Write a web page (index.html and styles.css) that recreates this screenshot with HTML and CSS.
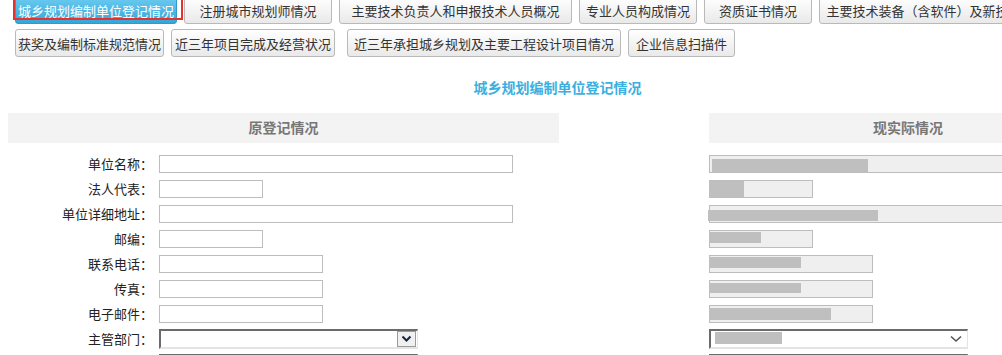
FILE: index.html
```html
<!DOCTYPE html>
<html lang="zh-CN">
<head>
  <meta charset="UTF-8" />
  <title>城乡规划编制单位登记情况</title>
  <link rel="stylesheet" href="styles.css">
</head>
<body>
  <div class="page">
    <div class="tabs">
      <div class="tab-row">
        <button class="tab active">城乡规划编制单位登记情况</button>
        <button class="tab">注册城市规划师情况</button>
        <button class="tab">主要技术负责人和申报技术人员概况</button>
        <button class="tab">专业人员构成情况</button>
        <button class="tab">资质证书情况</button>
        <button class="tab">主要技术装备（含软件）及新技术应用情况</button>
      </div>
      <div class="tab-row">
        <button class="tab">获奖及编制标准规范情况</button>
        <button class="tab">近三年项目完成及经营状况</button>
        <button class="tab">近三年承担城乡规划及主要工程设计项目情况</button>
        <button class="tab">企业信息扫描件</button>
      </div>
    </div>

    <h2 class="title">城乡规划编制单位登记情况</h2>

    <div class="heads">
      <div class="head">原登记情况</div>
      <div class="head head-now">现实际情况</div>
    </div>

    <div class="form">
      <label class="lbl">单位名称：</label>
      <input class="fld w-xl" type="text">
      <div class="cur w-xl"><span class="mask m1"></span></div>

      <label class="lbl">法人代表：</label>
      <input class="fld w-s" type="text">
      <div class="cur w-s"><span class="mask m2"></span></div>

      <label class="lbl">单位详细地址：</label>
      <input class="fld w-xl" type="text">
      <div class="cur w-xl"><span class="mask m3"></span></div>

      <label class="lbl">邮编：</label>
      <input class="fld w-s" type="text">
      <div class="cur w-s"><span class="mask m4"></span></div>

      <label class="lbl">联系电话：</label>
      <input class="fld w-m" type="text">
      <div class="cur w-m"><span class="mask m5"></span></div>

      <label class="lbl">传真：</label>
      <input class="fld w-m" type="text">
      <div class="cur w-m"><span class="mask m6"></span></div>

      <label class="lbl">电子邮件：</label>
      <input class="fld w-m" type="text">
      <div class="cur w-m"><span class="mask m7"></span></div>

      <label class="lbl">主管部门：</label>
      <div class="combo">
        <span class="combo-text"></span>
        <span class="combo-btn">
          <svg width="11" height="8" viewBox="0 0 11 8"><path d="M1.5 1.5 L5.5 5.5 L9.5 1.5" fill="none" stroke="#1a2540" stroke-width="2"/></svg>
        </span>
      </div>
      <div class="combo combo-now">
        <span class="combo-text"><span class="mask m8"></span></span>
        <span class="combo-arrow">
          <svg width="12" height="8" viewBox="0 0 12 8"><path d="M1 1.5 L6 6 L11 1.5" fill="none" stroke="#555" stroke-width="1.6"/></svg>
        </span>
      </div>

      <span class="lbl"></span>
      <div class="combo"><span class="combo-text"></span></div>
      <div class="combo combo-now"><span class="combo-text"></span></div>
    </div>
  </div>
</body>
</html>
```

FILE: styles.css
```css
* {
  box-sizing: border-box;
  font-family: 'Liberation Sans', 'Noto Sans CJK SC', sans-serif;
}
html {
  overflow: hidden;
}
body {
  margin: 0;
  background: #fff;
  color: #333;
  font-size: 13px;
}
.page {
  width: 1107px;
  padding-left: 8px;
}

/* tab buttons */
.tabs {
  margin-top: -4px;
  padding-left: 7px;
  display: flex;
  flex-direction: column;
  gap: 5px;
}
.tab-row {
  display: flex;
  gap: 7px;
  white-space: nowrap;
}
.tab {
  height: 28px;
  padding: 0;
  font-size: 13px;
  color: #333;
  background: linear-gradient(to bottom, #ffffff, #e9e9e9);
  border: 1px solid #b9b9b9;
  border-radius: 3px;
  overflow: hidden;
  flex: none;
}
.tab-row:first-child .tab:nth-child(1) { width: 162px; }
.tab-row:first-child .tab:nth-child(2) { width: 148px; }
.tab-row:first-child .tab:nth-child(3) { width: 233px; }
.tab-row:first-child .tab:nth-child(4) { width: 118px; }
.tab-row:first-child .tab:nth-child(5) { width: 108px; }
.tab-row:first-child .tab:nth-child(6) { width: 262px; }
.tab-row:last-child .tab:nth-child(1) { width: 149px; }
.tab-row:last-child .tab:nth-child(2) { width: 164px; margin-right: 5px; }
.tab-row:last-child .tab:nth-child(3) { width: 274px; }
.tab-row:last-child .tab:nth-child(4) { width: 107px; }

.tab.active {
  position: relative;
  overflow: visible;
  color: #fff;
  background: linear-gradient(to bottom, #6ccbf1, #34a6d8);
  border-color: #2f9acb;
}
.tab.active::after {
  content: "";
  position: absolute;
  left: -3px;
  right: -7px;
  top: -2px;
  bottom: 3px;
  border: 2px solid #e8302c;
}

.title {
  margin: 21px 0 0;
  text-align: center;
  font-size: 14px;
  line-height: 20px;
  font-weight: bold;
  color: #3aafe0;
}

/* section headers */
.heads {
  display: grid;
  grid-template-columns: 551px 398px;
  column-gap: 150px;
  margin-top: 15px;
}
.head {
  height: 30px;
  line-height: 30px;
  background: #f3f3f3;
  text-align: center;
  font-size: 14px;
  font-weight: bold;
  color: #777;
}

/* form */
.form {
  display: grid;
  grid-template-columns: 151px 400px 398px;
  grid-auto-rows: 25px;
  align-items: center;
  padding-top: 8px;
}
.form > .cur, .form > .combo-now {
  margin-left: 150px;
}
.lbl {
  text-align: right;
  padding-right: 6px;
  color: #222;
  font-size: 13px;
}
.fld, .cur {
  height: 18px;
  border: 1px solid #bdbdbd;
  margin: 0;
  padding: 0 3px;
  font-size: 12px;
}
.fld { background: #fff; }
.cur {
  position: relative;
  background: #efefef;
}
.w-xl { width: 354px; }
.w-m { width: 164px; }
.w-s { width: 104px; }

.mask {
  position: absolute;
  background: #bfbfbf;
}
.m1 { left: 2px; top: 3px; width: 156px; height: 13px; }
.m2 { left: -1px; top: 0; width: 35px; height: 16px; }
.m3 { left: -2px; top: 4px; width: 170px; height: 11px; }
.m4 { left: -1px; top: 1px; width: 52px; height: 11px; }
.m5 { left: -1px; top: 1px; width: 92px; height: 11px; }
.m6 { left: -1px; top: 2px; width: 92px; height: 10px; }
.m7 { left: -1px; top: 2px; width: 122px; height: 12px; }
.m8 { left: 4px; top: 1px; width: 67px; height: 12px; }

/* dropdowns */
.combo {
  width: 259px;
  height: 20px;
  display: flex;
  align-items: center;
  background: #fff;
  border-top: 2px solid #6b6b6b;
  border-left: 2px solid #6b6b6b;
  border-right: 1px solid #e4e4e4;
  border-bottom: 2px solid #e4e4e4;
}
.combo-text {
  position: relative;
  flex: 1;
  height: 100%;
}
.combo-btn {
  width: 19px;
  height: 16px;
  margin-right: 1px;
  display: flex;
  align-items: center;
  justify-content: center;
  background: #f0f0f0;
  border: 1px solid #9a9a9a;
}
.combo-arrow {
  width: 14px;
  margin-right: 4px;
  display: flex;
  align-items: center;
  justify-content: center;
}
```
